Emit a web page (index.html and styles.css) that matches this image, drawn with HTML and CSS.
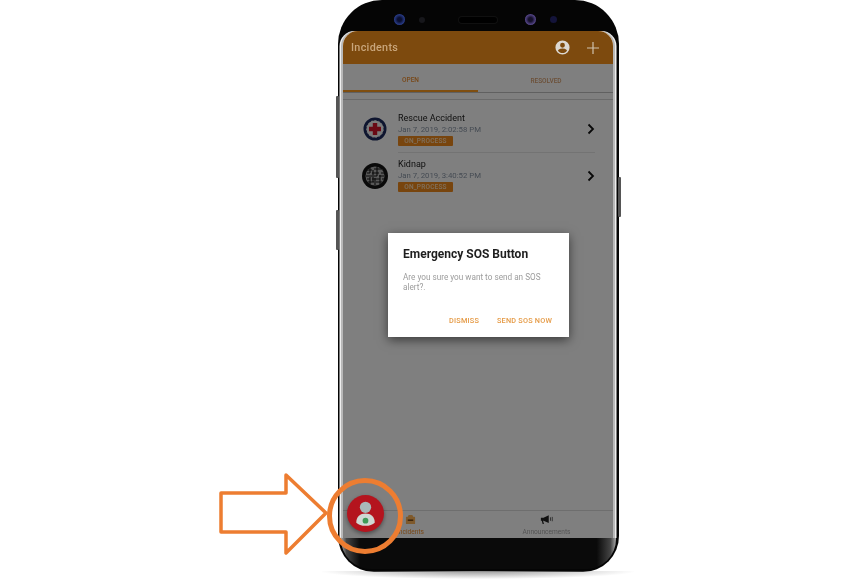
FILE: index.html
```html
<!DOCTYPE html>
<html lang="en">
<head>
<meta charset="UTF-8">
<title>Incidents — SOS</title>
<link rel="stylesheet" href="styles.css">
</head>
<body>
<div class="stage">
  <div class="phone">
    <span class="side-btn side-a"></span>
    <span class="side-btn side-b"></span>
    <span class="side-btn side-c"></span>
    <div class="bezel-top">
      <span class="lens lens-blue"></span>
      <span class="lens-dim"></span>
      <span class="speaker"></span>
      <span class="lens lens-purple"></span>
      <span class="lens-small"></span>
    </div>
    <div class="screen">
      <div class="topbar">
        <div class="topbar-title">Incidents</div>
        <svg class="ic-account" viewBox="0 0 24 24"><path fill="#dcd8d2" d="M12 2a10 10 0 1 0 0 20 10 10 0 0 0 0-20zm0 3.400a3.400 3.400 0 1 1 0 6.800 3.400 3.400 0 0 1 0-6.800zm0 14.400c-2.600 0-4.900-1.300-6.300-3.300 0-2 4.200-3.200 6.300-3.200s6.300 1.200 6.300 3.200c-1.400 2-3.700 3.300-6.300 3.300z"/></svg>
        <svg class="ic-plus" viewBox="0 0 14 14"><path stroke="#cfc2ae" stroke-width="1.400" d="M7 0v14M0 7h14"/></svg>
      </div>
      <div class="tabs">
        <div class="tab tab-on">OPEN</div>
        <div class="tab tab-off">RESOLVED</div>
      </div>
      <div class="subline"></div>
      <div class="list">
        <div class="item item-first">
          <svg class="badge-img badge-cross" viewBox="0 0 24 24">
            <circle cx="12" cy="12" r="10" fill="#f4f4f4" stroke="#1c2a5e" stroke-width="3"/>
            <path fill="none" stroke="#fff" stroke-dasharray="1.500 2" stroke-width=".7" d="M12 3.500a8.500 8.500 0 0 1 0 17 8.500 8.500 0 0 1 0-17"/>
            <path fill="#d3142a" d="M9.800 6h4.400v3.800H18v4.400h-3.800V18H9.800v-3.800H6V9.800h3.800z"/>
          </svg>
          <div class="item-body">
            <div class="item-title">Rescue Accident</div>
            <div class="item-date">Jan 7, 2019, 2:02:58 PM</div>
            <span class="status">ON_PROCESS</span>
          </div>
          <svg class="chev" viewBox="0 0 10 12"><path fill="none" stroke="#111" stroke-width="1.800" d="M2.500 1.500 7 6l-4.500 4.500"/></svg>
        </div>
        <div class="item">
          <svg class="badge-img" viewBox="0 0 26 26">
            <circle cx="13" cy="13" r="13" fill="#141414"/>
            <circle cx="13" cy="13" r="9.500" fill="#b0b0b0"/>
            <path fill="none" stroke="#141414" stroke-width="1.100" d="M5 7h5M12 6h8M5 10h3M10 10h7M19 10h3M4 13h6M12 13h3M17 13h5M5 16h3M10 16h8M20 16h2M6 19h6M14 19h6M8 5v5M11 7v12M15 4v9M18 12v9M13 15v7M8 14v7"/>
          </svg>
          <div class="item-body">
            <div class="item-title">Kidnap</div>
            <div class="item-date">Jan 7, 2019, 3:40:52 PM</div>
            <span class="status">ON_PROCESS</span>
          </div>
          <svg class="chev" viewBox="0 0 10 12"><path fill="none" stroke="#111" stroke-width="1.800" d="M2.500 1.500 7 6l-4.500 4.500"/></svg>
        </div>
      </div>
      <div class="bottomnav">
        <div class="nav-item nav-on">
          <svg class="nav-ic" viewBox="0 0 12 12"><path fill="#ffb458" d="M4 1h4l1 2h1.500q.5 0 .5.500V10.500q0 .5-.5.500h-9q-.5 0-.5-.5V3.500q0-.5.5-.5H3z"/><path fill="#6a3e10" d="M3 6h6v1.500H3z"/></svg>
          <span>Incidents</span>
        </div>
        <div class="nav-item nav-off">
          <svg class="nav-ic nav-ic-wide" viewBox="0 0 16 12"><path fill="#222" d="M1 4h3l6-3v9L4 7.500H3.500l1 3.500H3L2 7.500H1z"/><path stroke="#555" d="M12 3.500v4M14 3v5"/></svg>
          <span>Announcements</span>
        </div>
      </div>
      <div class="scrim"></div>
      <div class="dialog">
        <div class="dialog-title">Emergency SOS Button</div>
        <div class="dialog-text">Are you sure you want to send an SOS alert?.</div>
        <div class="dialog-actions">
          <span class="dialog-btn">DISMISS</span>
          <span class="dialog-btn">SEND SOS NOW</span>
        </div>
      </div>
    </div>
    <div class="bezel-bottom"></div>
    <div class="fab">
      <svg viewBox="0 0 36 36">
        <circle cx="18" cy="12" r="5.500" fill="#a9b8b8"/>
        <path fill="#cfd8d4" d="M9 27c0-6 4-9 9-9s9 3 9 9c-2 2-5 3-9 3s-7-1-9-3z"/>
        <circle cx="18" cy="25" r="2.800" fill="#3e9a58"/>
      </svg>
    </div>
  </div>
  <div class="floor-shadow"></div>
  <svg class="callout" viewBox="0 0 200 120">
    <path fill="#fff" stroke="#ed7d31" stroke-width="3.500" stroke-linejoin="round" d="M3 21h65V3l40 38-40 40V60H3z"/>
  </svg>
  <div class="ring"></div>
</div>
</body>
</html>
```
FILE: styles.css
```css
*{margin:0;padding:0;box-sizing:border-box}
html,body{height:100%;overflow:hidden;background:#fff}
body{font-family:'Roboto',sans-serif}
.stage{position:relative;width:862px;height:579px;padding-left:338px}

.phone{position:relative;width:281px;height:572px;background:#050505;border-radius:44px 44px 36px 36px;padding:0 6px 3px 5px;display:flex;flex-direction:column}
.side-btn{position:absolute;left:-2px;width:3px;background:#555;border-radius:1px}
.side-a{top:96px;height:82px}
.side-b{top:210px;height:40px}
.side-c{left:auto;right:-2px;top:177px;height:40px}

.bezel-top{height:31px;flex:none;display:flex;align-items:center;padding:8px 0 0 51px;filter:blur(.7px)}
.lens{width:11px;height:11px;border-radius:50%;flex:none}
.lens-blue{background:radial-gradient(circle,#0a0f30 25%,#2b3f8f 70%,#15182e)}
.lens-purple{background:radial-gradient(circle,#15102a 25%,#5a4a90 70%,#1c1830);margin-left:28px}
.lens-dim{width:6px;height:6px;border-radius:50%;background:#17171b;margin-left:14px;flex:none}
.speaker{width:38px;height:6px;border-radius:3px;background:#000;margin-left:34px;flex:none;box-shadow:0 0 0 1px #101010}
.lens-small{width:7px;height:7px;border-radius:50%;background:#14143a;margin-left:14px;flex:none}

.screen{position:relative;flex:1;background:#fff;border-radius:15px 15px 0 0;display:flex;flex-direction:column;box-shadow:-2px 0 0 #b8b8b8,2px 0 0 #b8b8b8,-3.500px 0 0 #eee,3.500px 0 0 #eee}
.topbar{height:33px;flex:none;background:#fa941c;border-radius:15px 15px 0 0;display:flex;align-items:center;padding:0 14px 0 8px}
.topbar-title{flex:1;font-size:10.800px;font-weight:500;letter-spacing:.3px;color:#c9a67c;position:relative;z-index:2;filter:blur(.4px)}
.ic-account{width:17px;height:17px;margin-right:16px;position:relative;z-index:2;filter:blur(.3px)}
.ic-plus{width:12px;height:12px;position:relative;z-index:2;filter:blur(.3px)}

.tabs{height:29px;flex:none;display:flex;border-bottom:1px solid #c0c0c0;filter:blur(.4px)}
.tab{width:135px;display:flex;align-items:center;justify-content:center;font-size:6.500px;font-weight:500;padding-top:6px}
.tab-on{color:#f09030;border-bottom:2px solid #ff9c20}
.tab-off{color:#d8a070;padding-left:1px}
.subline{height:7px;flex:none;border-bottom:1px solid #d4d4d4}

.list{flex:1;display:flex;flex-direction:column;padding-left:19px}
.item{height:46px;flex:none;display:flex;align-items:center;padding-right:17px;filter:blur(.35px)}
.item-first{height:53px;padding-top:5px}
.badge-img{width:26px;height:26px;flex:none;margin-right:10px}
.badge-cross{width:24px;height:24px;margin-left:1px;margin-right:11px}
.item-body{flex:1;align-self:stretch;display:flex;flex-direction:column;justify-content:center;align-items:flex-start;border-bottom:1px solid #e6e6e6;margin-right:-9px;padding-bottom:1px}
.item-first .item-body{padding-top:1px;padding-bottom:0}
.item:last-child .item-body{border-bottom:none}
.item-title{font-size:9px;color:#222;line-height:11px}
.item-date{font-size:7.800px;color:#8a96a6;line-height:11px}
.status{display:block;width:55px;height:10px;line-height:10px;margin-top:1px;border-radius:1px;background:#f08a1c;color:#ffe0b8;font-size:6.500px;font-weight:500;text-align:center;letter-spacing:.2px}
.chev{width:10px;height:12px;flex:none}

.bottomnav{height:28px;flex:none;display:flex;border-top:1px solid #dcdcdc;filter:blur(.4px)}
.nav-item{width:135px;display:flex;flex-direction:column;align-items:center;gap:3px;padding-top:3px;font-size:6.600px;color:#a8a8a8}
.nav-on{color:#f09030}
.nav-off{padding-left:2px}
.nav-ic{width:11px;height:11px}
.nav-ic-wide{width:14px}

.scrim{position:absolute;inset:0;background:rgba(0,0,0,.5);border-radius:15px 15px 0 0}
.dialog{position:absolute;left:45px;top:202px;width:181px;height:104px;background:#fff;padding:14px 15px 0;box-shadow:0 3px 10px rgba(0,0,0,.55);filter:blur(.3px);display:flex;flex-direction:column;z-index:3}
.dialog-title{font-size:12px;font-weight:700;line-height:14px;color:#1e1e1e}
.dialog-text{font-size:8.200px;line-height:10px;color:#9c9c9c;margin-top:11px;width:145px}
.dialog-actions{display:flex;justify-content:flex-end;gap:18px;margin-top:auto;padding:0 2px 12px 0}
.dialog-btn{font-size:7.300px;font-weight:500;color:#e59a45;letter-spacing:.2px}

.bezel-bottom{height:31px;flex:none;margin:0 -3px 0 -2px;border-radius:0 0 30px 30px;background:linear-gradient(90deg,#a8a8a8 0,#444 2%,#0a0a0a 7%,#0a0a0a 93%,#444 98%,#a8a8a8 100%)}

.fab{position:absolute;left:9px;top:495px;width:37px;height:37px;border-radius:50%;background:#b4141e;box-shadow:0 2px 4px rgba(0,0,0,.4);filter:blur(.4px)}
.fab svg{display:block;width:37px;height:37px}

.floor-shadow{position:absolute;left:322px;top:571px;width:312px;height:8px;background:radial-gradient(ellipse at 50% 0,#9a9a9a,rgba(255,255,255,0) 72%)}
.callout{position:absolute;left:218px;top:472px;width:200px;height:120px;overflow:visible}
.ring{position:absolute;left:327px;top:478px;width:76px;height:76px;border:5px solid #ed7d31;border-radius:50%}
```
